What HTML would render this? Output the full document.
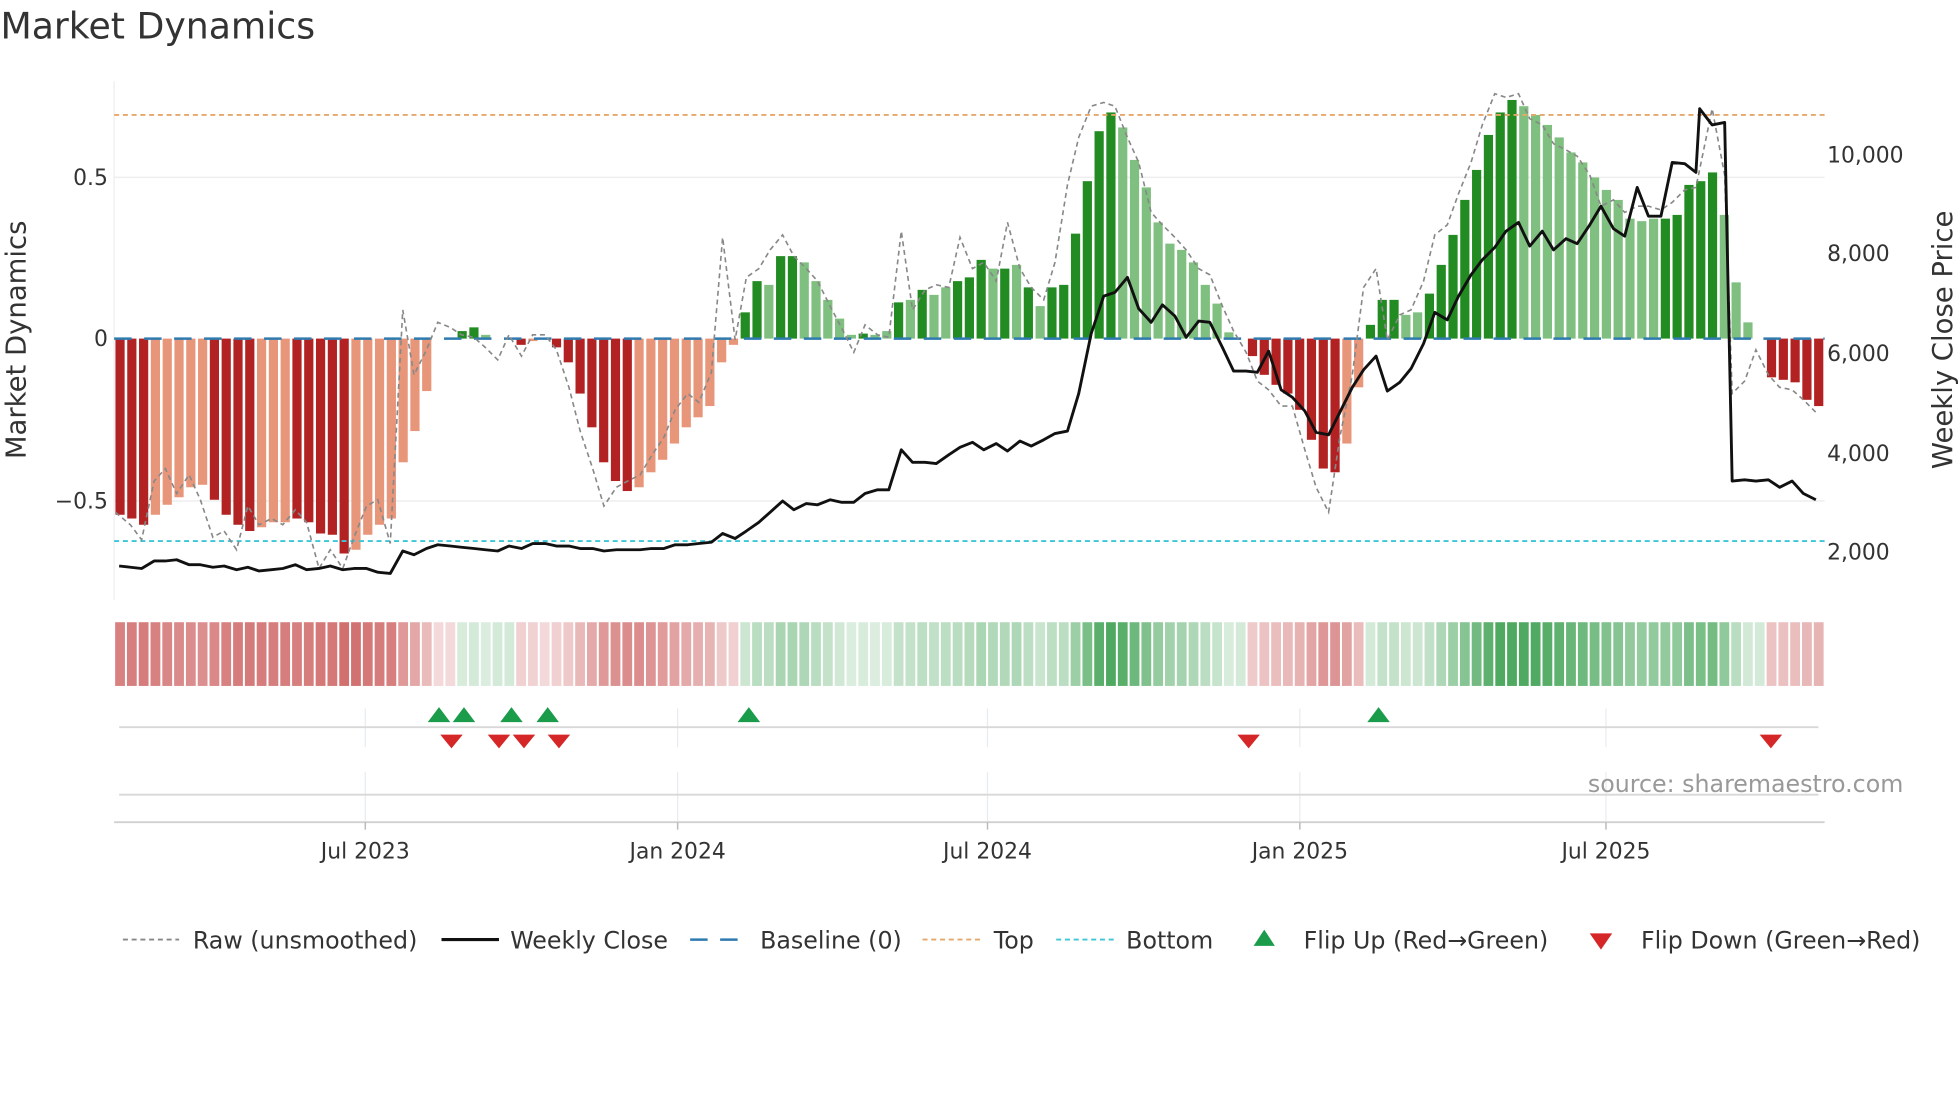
<!DOCTYPE html>
<html><head><meta charset="utf-8"><style>
html,body{margin:0;padding:0;background:#fff;}
svg{display:block;font-family:"DejaVu Sans","Liberation Sans",sans-serif;}
</style></head><body>
<svg id="s" width="1960" height="1102" viewBox="0 0 1568 882" xmlns="http://www.w3.org/2000/svg">
<rect width="1568" height="882" fill="#fff"/>
<text x="0" y="31" font-size="29" fill="#333">Market Dynamics</text>
<line x1="91" y1="65" x2="91" y2="480" stroke="#eee" stroke-width="1"/>
<line x1="91" y1="142" x2="1460" y2="142" stroke="#eee" stroke-width="1.2"/>
<line x1="91" y1="401" x2="1460" y2="401" stroke="#eee" stroke-width="1.2"/>
<g font-size="17.5" fill="#333" text-anchor="end">
<text x="86" y="148">0.5</text><text x="86" y="277">0</text><text x="86" y="407">−0.5</text>
</g>
<g font-size="17.5" fill="#333">
<text x="1462" y="130">10,000</text><text x="1462" y="209">8,000</text><text x="1462" y="289">6,000</text><text x="1462" y="369">4,000</text><text x="1462" y="448">2,000</text>
</g>
<text transform="translate(20,272) rotate(-90)" font-size="22" fill="#333" text-anchor="middle">Market Dynamics</text>
<text transform="translate(1562,272) rotate(-90)" font-size="22" fill="#333" text-anchor="middle">Weekly Close Price</text>
<g id="bars"></g>
<g id="heat"></g>
<line x1="91" y1="92" x2="1460" y2="92" stroke="#e6a86a" stroke-width="1.5" stroke-dasharray="4,3"/>
<line x1="91" y1="433" x2="1460" y2="433" stroke="#3cc6d6" stroke-width="1.5" stroke-dasharray="4,3"/>
<line x1="91" y1="271" x2="1460" y2="271" stroke="#2f7bb0" stroke-width="2" stroke-dasharray="14,10"/>
<polyline id="raw" fill="none" stroke="#888" stroke-width="1.3" stroke-dasharray="4,3"/>
<polyline id="px" fill="none" stroke="#111" stroke-width="2.3" stroke-linejoin="round"/>
<g stroke="#e8ecf0" stroke-width="1">
<line x1="292" y1="567" x2="292" y2="598"/><line x1="542" y1="567" x2="542" y2="598"/><line x1="790" y1="567" x2="790" y2="598"/><line x1="1040" y1="567" x2="1040" y2="598"/><line x1="1285" y1="567" x2="1285" y2="598"/>
<line x1="292" y1="618" x2="292" y2="657"/><line x1="542" y1="618" x2="542" y2="657"/><line x1="790" y1="618" x2="790" y2="657"/><line x1="1040" y1="618" x2="1040" y2="657"/><line x1="1285" y1="618" x2="1285" y2="657"/>
</g>
<line x1="95" y1="582" x2="1455" y2="582" stroke="#d8d8d8" stroke-width="1.5"/>
<line x1="95" y1="636" x2="1455" y2="636" stroke="#d8d8d8" stroke-width="1.5"/>
<line x1="91" y1="658" x2="1460" y2="658" stroke="#d0d0d0" stroke-width="1.5"/>
<g stroke="#bbb" stroke-width="1.2"><line x1="292" y1="658" x2="292" y2="664"/><line x1="542" y1="658" x2="542" y2="664"/><line x1="790" y1="658" x2="790" y2="664"/><line x1="1040" y1="658" x2="1040" y2="664"/><line x1="1285" y1="658" x2="1285" y2="664"/></g>
<g font-size="17.5" fill="#333" text-anchor="middle">
<text x="292" y="687">Jul 2023</text><text x="542" y="687">Jan 2024</text><text x="790" y="687">Jul 2024</text><text x="1040" y="687">Jan 2025</text><text x="1285" y="687">Jul 2025</text>
</g>
<g id="mk"></g>
<text x="1523" y="634" font-size="19" fill="#999" text-anchor="end">source: sharemaestro.com</text>
<g font-size="19" fill="#333">
<line x1="98" y1="752" x2="143" y2="752" stroke="#888" stroke-width="1.5" stroke-dasharray="4,3"/>
<text x="154" y="759">Raw (unsmoothed)</text>
<line x1="353" y1="752" x2="399" y2="752" stroke="#111" stroke-width="2.5"/>
<text x="408" y="759">Weekly Close</text>
<line x1="552" y1="752" x2="598" y2="752" stroke="#2f7bb0" stroke-width="2" stroke-dasharray="14,10"/>
<text x="608" y="759">Baseline (0)</text>
<line x1="738" y1="752" x2="784" y2="752" stroke="#e6a86a" stroke-width="1.5" stroke-dasharray="4,3"/>
<text x="795" y="759">Top</text>
<line x1="845" y1="752" x2="891" y2="752" stroke="#3cc6d6" stroke-width="1.5" stroke-dasharray="4,3"/>
<text x="901" y="759">Bottom</text>
<polygon points="1003,757 1020,757 1011.5,744" fill="#1a9c4a"/>
<text x="1043" y="759">Flip Up (Red→Green)</text>
<polygon points="1272,747 1290,747 1281,760" fill="#d62728"/>
<text x="1313" y="759">Flip Down (Green→Red)</text>
</g>
</svg>
<script>
(function(){
var NS="http://www.w3.org/2000/svg";
function el(t,a,p){var e=document.createElementNS(NS,t);for(var k in a)e.setAttribute(k,a[k]);p.appendChild(e);return e;}
var B="412D 415D 420D 412L 404L 398L 390L 388L 400D 412D 420D 425D 422L 418L 418L 415D 418D 427D 428D 443D 440L 428L 420L 415L 370L 345L 313L 271L 271L 265G 262G 268g 271g 271g 276D 273L 271L 278D 290D 315D 342D 370D 385D 393D 390L 378L 368L 355L 342L 334L 325L 290L 276L 250G 225G 228g 205G 205G 210g 225g 240g 255g 268g 267G 268g 265g 242G 240g 232G 236g 230g 225G 222G 208G 215g 215G 212g 230G 245g 230G 228G 187G 145G 105G 90G 102g 128g 150g 178g 195g 200g 210g 228g 243g 266g 271g 285D 300D 308D 315D 328D 352D 375D 378D 355L 310L 260G 240G 240G 252g 250g 235G 212G 188G 160G 136G 108G 90G 80G 85g 92g 100g 110g 122g 130g 142g 152g 160g 175g 177g 175g 175G 172G 148G 145G 138G 172g 226g 258g 271g 302D 304D 306D 320D 325D".split(" ");
var N=B.length,x0=91,step=(1460-91)/N,w=step*0.78;
var cols={D:"#b22222",L:"#e8967a",G:"#228b22",g:"#7fbf7f"};
var bars=document.getElementById("bars"),heat=document.getElementById("heat");
for(var i=0;i<N;i++){
 var y=parseFloat(B[i]),t=B[i].slice(-1),x=x0+i*step+(step-w)/2;
 var top=Math.min(y,271),h=Math.abs(y-271);
 if(h>0.5)el("rect",{x:x.toFixed(2),y:top,width:w.toFixed(2),height:h,fill:cols[t]},bars);
 var v=(271-y)/258, m=Math.min(1,Math.abs(v)/0.7), a=0.18+0.72*m;
 var c=v>=0.005?"rgba(60,160,80,"+a.toFixed(2)+")":(v<=-0.005?"rgba(200,80,80,"+(0.25+0.6*m).toFixed(2)+")":((t=="G"||t=="g")?"rgba(60,160,80,0.22)":"rgba(200,80,80,0.22)"));
 el("rect",{x:(x0+i*step+0.8).toFixed(2),y:498,width:(step-1.6).toFixed(2),height:51,fill:c},heat);
}
document.getElementById("raw").setAttribute("points","92,410 104,420 113,432 123,385 132,375 141,395 151,380 160,400 170,430 179,425 189,440 198,405 207,420 217,415 226,420 236,408 245,418 255,455 264,440 274,455 283,430 293,405 302,400 312,435 322,248 331,300 341,280 350,258 360,262 369,268 379,270 388,278 398,288 407,268 417,285 426,268 436,268 445,280 455,310 464,345 474,375 483,405 493,390 502,385 512,380 521,365 531,350 540,328 550,315 559,322 569,298 578,190 588,272 597,222 607,215 616,200 626,188 635,205 645,215 654,225 664,245 673,262 683,282 692,260 702,268 711,270 721,185 730,248 740,232 749,228 759,230 768,190 778,215 787,210 797,225 806,178 816,215 825,230 835,240 844,210 854,148 863,110 873,85 883,82 892,85 902,110 911,130 921,170 930,180 940,190 949,200 959,215 968,220 978,245 987,265 997,282 1006,305 1015,312 1025,325 1034,325 1044,360 1053,390 1063,410 1072,350 1082,300 1091,230 1101,215 1110,272 1120,252 1129,248 1139,225 1148,188 1158,180 1167,155 1177,130 1186,100 1196,75 1205,78 1215,75 1224,95 1234,100 1243,115 1253,120 1262,125 1272,140 1281,165 1291,160 1300,170 1310,165 1319,165 1329,168 1338,162 1348,152 1357,150 1370,87 1380,140 1386,315 1396,305 1405,280 1415,300 1424,310 1434,312 1443,320 1453,330");
document.getElementById("px").setAttribute("points","95,453 104,454 113,455 123,449 132,449 141,448 151,452 160,452 170,454 179,453 189,456 198,454 207,457 217,456 226,455 236,452 245,456 255,455 264,453 274,456 283,455 293,455 302,458 312,459 322,441 331,444 341,439 350,436 360,437 369,438 379,439 388,440 398,441 407,437 417,439 426,435 436,435 445,437 455,437 464,439 474,439 483,441 493,440 502,440 512,440 521,439 531,439 540,436 550,436 559,435 569,434 578,427 588,431 597,425 607,418 616,410 626,401 635,408 645,403 654,404 664,400 673,402 683,402 692,395 702,392 711,392 721,360 730,370 740,370 749,371 759,364 768,358 778,354 787,360 797,355 806,361 816,353 825,357 835,352 844,347 854,345 863,315 873,267 883,237 892,234 902,222 911,247 921,258 930,244 940,253 949,270 959,257 968,258 978,278 987,297 997,297 1006,298 1015,281 1025,312 1034,318 1044,329 1053,346 1063,348 1072,330 1082,310 1091,296 1101,285 1110,313 1120,306 1129,295 1139,275 1148,250 1158,256 1167,237 1177,220 1186,208 1196,198 1205,185 1215,178 1224,197 1234,185 1243,200 1253,191 1262,195 1272,180 1281,165 1291,183 1300,189 1310,150 1319,173 1329,173 1338,130 1348,131 1357,138 1360,87 1370,100 1380,98 1386,385 1396,384 1405,385 1415,384 1424,390 1434,385 1443,395 1453,400");
var mk=document.getElementById("mk");
[351,371,409,438,599,1103].forEach(function(x){el("polygon",{points:(x-9)+",578 "+(x+9)+",578 "+x+",566",fill:"#1a9c4a"},mk);});
[361,399,419,447,999,1417].forEach(function(x){el("polygon",{points:(x-9)+",588 "+(x+9)+",588 "+x+",599",fill:"#d62728"},mk);});
})();
</script>
</body></html>
